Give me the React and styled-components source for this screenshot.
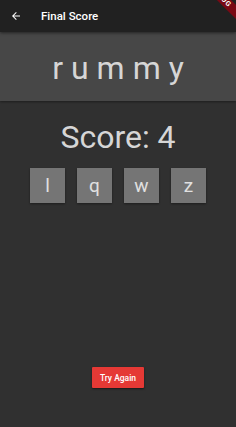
import React from "react";
import styled, { createGlobalStyle } from "styled-components";

const Global = createGlobalStyle`
  html, body { margin: 0; padding: 0; background: #303030; }
  body { font-family: Roboto, "Noto Sans", sans-serif; overflow: hidden; }
`;

const Screen = styled.div`
  position: relative;
  width: 236px;
  height: 427px;
  background: #303030;
  display: flex;
  flex-direction: column;
  overflow: hidden;
`;

const AppBar = styled.header`
  height: 32px;
  background: #212121;
  display: flex;
  align-items: center;
  padding-left: 10px;
  gap: 19px;
  box-shadow: 0 1px 3px rgba(0, 0, 0, 0.5);
  z-index: 2;
  flex-shrink: 0;
`;

const BackIcon = styled.svg`
  width: 12px;
  height: 12px;
  display: block;
`;

const Title = styled.h1`
  margin: 0;
  font-size: 11.5px;
  font-weight: 500;
  color: #ffffff;
`;

const WordBanner = styled.section`
  height: 69px;
  background: #474747;
  display: flex;
  align-items: center;
  justify-content: center;
  box-shadow: 0 1px 2px rgba(0, 0, 0, 0.4);
  flex-shrink: 0;
`;

const Word = styled.div`
  font-size: 32px;
  color: #d6d6d6;
  letter-spacing: 8px;
  margin-right: -8px;
  padding-top: 2px;
`;

const Body = styled.main`
  flex: 1;
  display: flex;
  flex-direction: column;
  align-items: center;
`;

const Score = styled.div`
  margin-top: 17px;
  font-size: 32px;
  color: #d6d6d6;
  line-height: 38px;
`;

const Tiles = styled.div`
  margin-top: 12px;
  display: flex;
  gap: 12px;
`;

const Tile = styled.div`
  width: 35px;
  height: 35px;
  background: #757575;
  color: #e0e0e0;
  font-size: 19px;
  display: flex;
  align-items: center;
  justify-content: center;
  box-shadow: 0 1px 2px rgba(0, 0, 0, 0.4);
`;

const Spacer = styled.div`
  flex: 1;
`;

const RetryButton = styled.button`
  margin-bottom: 39px;
  width: 52px;
  height: 21px;
  border: none;
  border-radius: 1px;
  background: #e53935;
  color: #ffffff;
  font-family: Roboto, sans-serif;
  font-size: 8.5px;
  font-weight: 500;
  padding: 0;
  box-shadow: 0 1px 2px rgba(0, 0, 0, 0.5);
`;

const DebugRibbon = styled.div`
  position: absolute;
  left: 181px;
  top: -8px;
  width: 80px;
  height: 10px;
  background: rgba(160, 0, 16, 0.7);
  color: #fff;
  font-size: 7px;
  font-weight: 700;
  line-height: 10px;
  text-align: center;
  letter-spacing: 0.5px;
  transform: rotate(45deg);
  z-index: 5;
`;

export default function App() {
  const letters = ["l", "q", "w", "z"];
  return (
    <>
      <Global />
      <Screen>
        <AppBar>
          <BackIcon viewBox="0 0 24 24">
            <path
              d="M20 11H7.83l5.59-5.59L12 4l-8 8 8 8 1.41-1.41L7.83 13H20v-2z"
              fill="#ffffff"
            />
          </BackIcon>
          <Title>Final Score</Title>
        </AppBar>
        <WordBanner>
          <Word>rummy</Word>
        </WordBanner>
        <Body>
          <Score>Score: 4</Score>
          <Tiles>
            {letters.map((l) => (
              <Tile key={l}>{l}</Tile>
            ))}
          </Tiles>
          <Spacer />
          <RetryButton>Try Again</RetryButton>
        </Body>
        <DebugRibbon>DEBUG</DebugRibbon>
      </Screen>
    </>
  );
}
